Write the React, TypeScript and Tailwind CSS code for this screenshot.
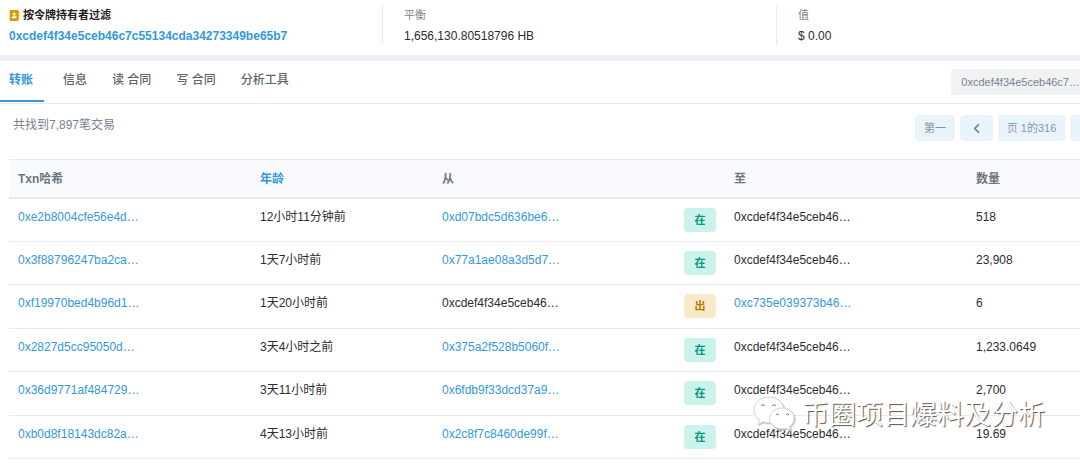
import { FaAddressBook, FaChevronLeft } from "react-icons/fa"

const HOLDER = "0xcdef4f34e5ceb46…"

const tabs = ["转账", "信息", "读 合同", "写 合同", "分析工具"]

const transfers = [
  { hash: "0xe2b8004cfe56e4d…", age: "12小时11分钟前", from: "0xd07bdc5d636be6…", to: HOLDER, amount: "518" },
  { hash: "0x3f88796247ba2ca…", age: "1天7小时前", from: "0x77a1ae08a3d5d7…", to: HOLDER, amount: "23,908" },
  { hash: "0xf19970bed4b96d1…", age: "1天20小时前", from: HOLDER, to: "0xc735e039373b46…", amount: "6" },
  { hash: "0x2827d5cc95050d…", age: "3天4小时之前", from: "0x375a2f528b5060f…", to: HOLDER, amount: "1,233.0649" },
  { hash: "0x36d9771af484729…", age: "3天11小时前", from: "0x6fdb9f33dcd37a9…", to: HOLDER, amount: "2,700" },
  { hash: "0xb0d8f18143dc82a…", age: "4天13小时前", from: "0x2c8f7c8460de99f…", to: HOLDER, amount: "19.69" },
]

function Address({ value }: { value: string }) {
  if (value === HOLDER) return <span>{value}</span>
  return (
    <a href="#" className="text-[#3498db]">
      {value}
    </a>
  )
}

function Direction({ out }: { out: boolean }) {
  return (
    <span
      className={
        out
          ? "flex h-6 w-8 items-center justify-center rounded bg-[#f8e9cb] text-[11px] font-bold text-[#b47d00]"
          : "flex h-6 w-8 items-center justify-center rounded bg-[#ccf3eb] text-[11px] font-bold text-[#02977e]"
      }
    >
      {out ? "出" : "在"}
    </span>
  )
}

function Summary() {
  return (
    <section className="flex pt-[6px] pb-[10px] leading-[18px]">
      <div className="w-[382px] pl-[9px]">
        <div className="flex items-center gap-[3px] text-[11px] font-bold leading-[18px] text-[#1e2022]">
          {/* Address book */}
          <FaAddressBook className="size-[11px] text-[#db9a04]" />
          按令牌持有者过滤
        </div>
        <a href="#" className="mt-[3px] block font-bold text-[#3498db]">
          0xcdef4f34e5ceb46c7c55134cda34273349be65b7
        </a>
      </div>
      <div className="w-[394px] border-l border-[#e7eaf3] pl-[21px]">
        <div className="text-[11px] leading-[18px] text-[#77838f]">平衡</div>
        <div className="mt-[3px]">1,656,130.80518796 HB</div>
      </div>
      <div className="flex-1 border-l border-[#e7eaf3] pl-[21px]">
        <div className="text-[11px] leading-[18px] text-[#77838f]">值</div>
        <div className="mt-[3px]">$ 0.00</div>
      </div>
    </section>
  )
}

function Tabs() {
  return (
    <nav className="flex items-start justify-between border-b border-[#e7eaf3]">
      <div className="flex">
        {tabs.map((tab, i) => (
          <button
            key={tab}
            type="button"
            className={
              i === 0
                ? "h-[41px] border-b-2 border-[#3498db] pt-px pr-[11px] pl-[9px] pb-[3px] font-bold text-[#3498db]"
                : "mb-px h-[41px] border-b-2 border-transparent pt-px pr-[6px] pl-[19px] pb-[3px] font-medium text-[#5c6670]"
            }
          >
            {tab}
          </button>
        ))}
      </div>
      <span className="mt-2 rounded-l-sm bg-[#f1f2f4] pl-[10px] text-[11px] leading-[26px] text-[#77838f]">
        0xcdef4f34e5ceb46c7…
      </span>
    </nav>
  )
}

function Pager() {
  return (
    <div className="flex items-start justify-between pt-[10px] pl-[13px]">
      <p className="leading-[22px] text-[#77838f]">共找到7,897笔交易</p>
      <div className="flex gap-[5px] pt-px text-[11px] text-[#8c98a4]">
        <button type="button" className="h-[26px] w-10 rounded bg-[#e9f3fa]">
          第一
        </button>
        <button type="button" aria-label="上一页" className="flex h-[26px] w-[33px] items-center justify-center rounded bg-[#e9f3fa]">
          <FaChevronLeft className="size-[11px] text-[#77838f]" />
        </button>
        <span className="h-[26px] w-[67px] rounded bg-[#e9f3fa] text-center leading-[26px]">页 1的316</span>
        <button type="button" aria-label="下一页" className="h-[26px] w-[10px] rounded-l bg-[#e9f3fa]" />
      </div>
    </div>
  )
}

function Transfers() {
  return (
    <div className="mt-[18px] pl-[9px]">
      <table className="w-full table-fixed border-collapse text-left">
        <thead>
          <tr className="h-[38px] border-t border-b-2 border-[#e7eaf3] bg-[#f8fafd] text-[#6c7680]">
            <th className="w-[242px] pt-px pl-[9px]">Txn哈希</th>
            <th className="w-[182px] pt-px pl-[9px]">
              <a href="#" className="text-[#3498db]">
                年龄
              </a>
            </th>
            <th className="w-[242px] pt-px pl-[9px]">从</th>
            <th className="w-[50px]" />
            <th className="w-[242px] pt-px pl-[9px]">至</th>
            <th className="pt-px pl-[9px]">数量</th>
          </tr>
        </thead>
        <tbody>
          {transfers.map((tx) => (
            <tr key={tx.hash} className="h-[43px] border-b border-[#e7eaf3] align-top leading-[18px] odd:h-11">
              <td className="pt-[9px] pl-[9px]">
                <Address value={tx.hash} />
              </td>
              <td className="pt-[9px] pl-[9px]">{tx.age}</td>
              <td className="pt-[9px] pl-[9px]">
                <Address value={tx.from} />
              </td>
              <td className="pt-[9px] pl-[9px]">
                <Direction out={tx.from === HOLDER} />
              </td>
              <td className="pt-[9px] pl-[9px]">
                <Address value={tx.to} />
              </td>
              <td className="pt-[9px] pl-[9px]">{tx.amount}</td>
            </tr>
          ))}
        </tbody>
      </table>
    </div>
  )
}

function Watermark() {
  return (
    <div className="pointer-events-none absolute right-[35px] bottom-[26px] flex items-center gap-[5px]">
      <svg viewBox="0 0 44 37" className="h-[37px] w-11 drop-shadow-[1px_1px_0_#c4c4c4]">
        <g className="fill-white stroke-[#c9c9c9]" strokeWidth="0.8">
          <path d="M16 1C7.500 1 1 6.500 1 14c0 4 2 7.500 5.500 10L5 28.500l5-2.500c2 .6 4 1 6 1 8.500 0 15-5.500 15-13S24.500 1 16 1Z" />
          <path d="M29 12c-7 0-12.500 4.500-12.500 10.500S22 33 29 33c1.500 0 3-.2 4.500-.7l4 2.200-1-3.800c3-2 4.800-5 4.800-8.200C41.300 16.500 36 12 29 12Z" />
        </g>
        <path className="fill-none stroke-[#777777]" d="M8 10q2-3 4 0M19 10q2-3 4 0M23 19q1.500-2.500 3 0M33 19q1.500-2.500 3 0" />
      </svg>
      <span className="text-[27px] leading-9 text-white [text-shadow:1px_1px_1px_#555]">币圈项目爆料及分析</span>
    </div>
  )
}

export default function App() {
  return (
    <div className="relative overflow-hidden bg-white font-['Liberation_Sans','Noto_Sans_CJK_SC',sans-serif] text-[12px] text-[#2b2d30]">
      <Summary />
      <div className="h-[6px] bg-[#eeeff6]" />
      <Tabs />
      <Pager />
      <Transfers />
      <Watermark />
    </div>
  )
}
